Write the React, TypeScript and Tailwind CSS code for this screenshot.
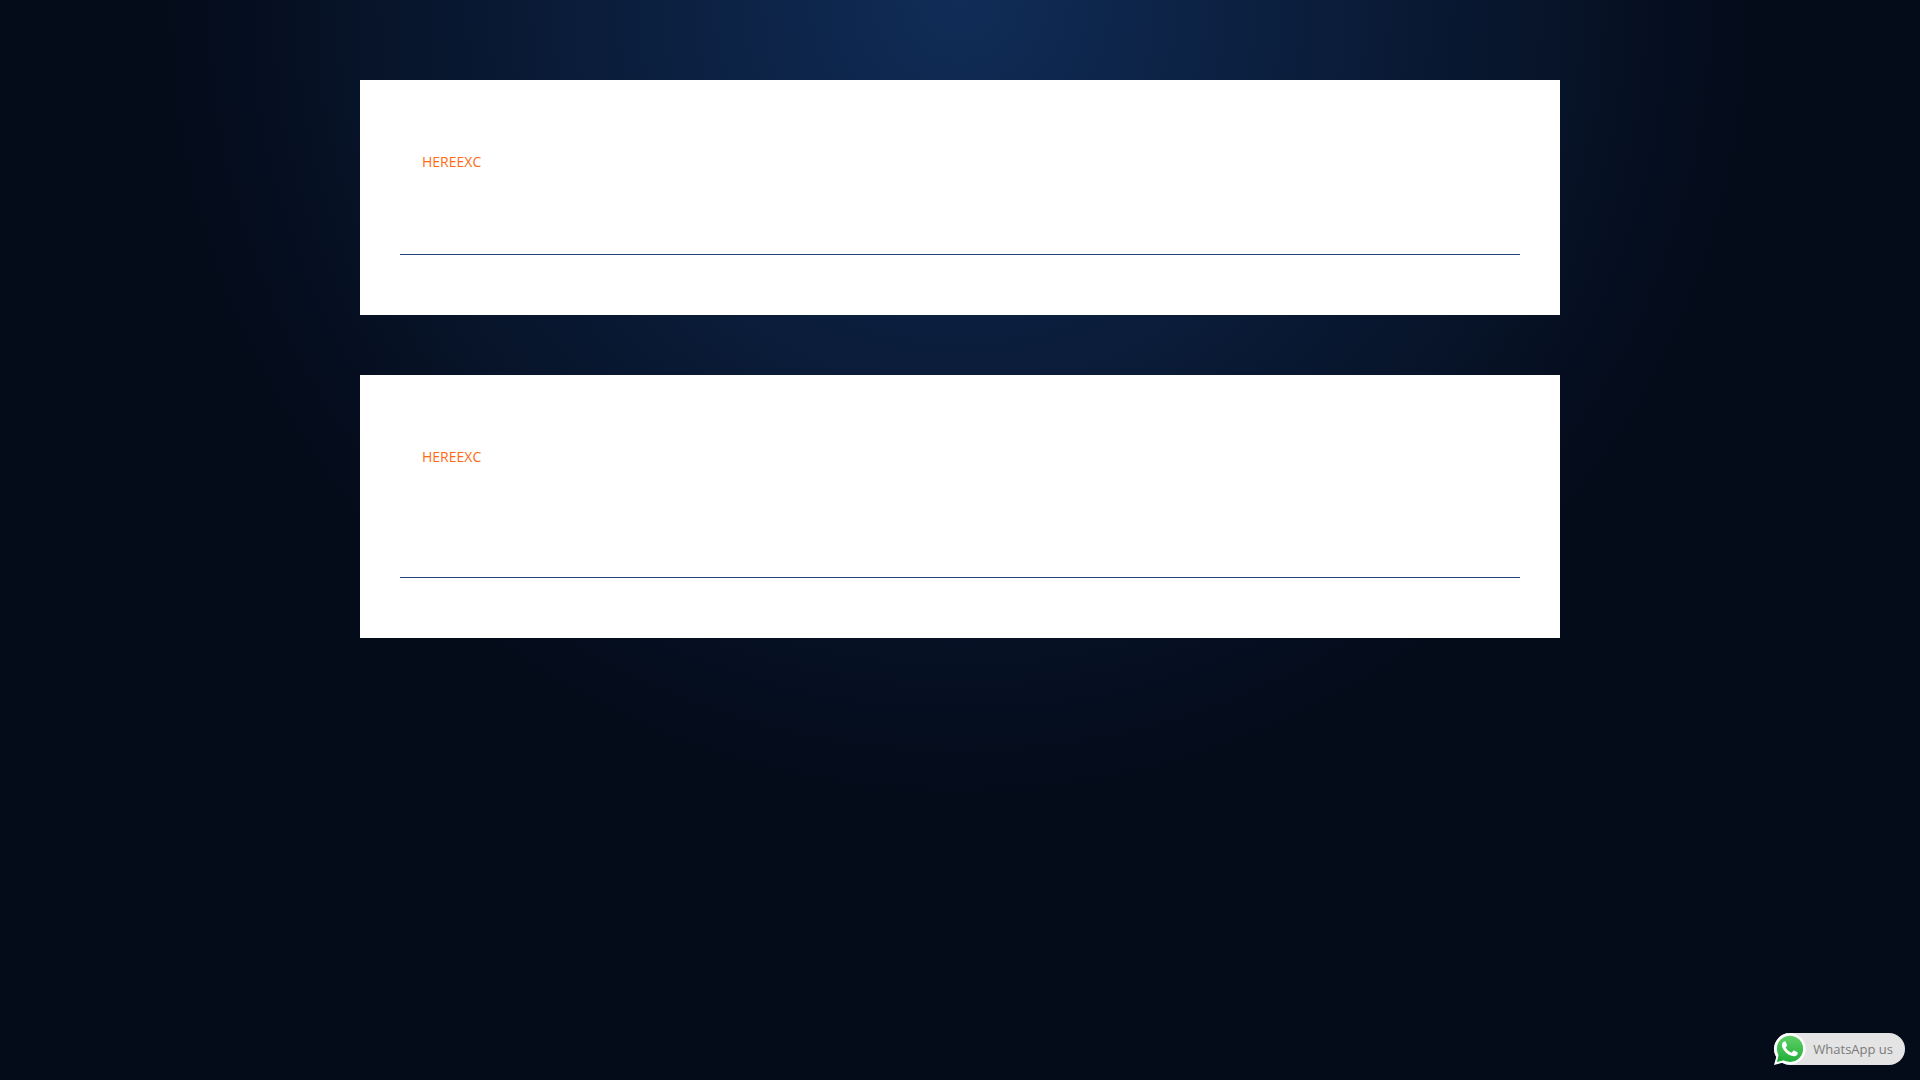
const entries = [
  { id: 1, title: 'HEREEXC', bodyHeight: 'min-h-[115px]' },
  { id: 2, title: 'HEREEXC', bodyHeight: 'min-h-[143px]' },
];

function WhatsAppIcon() {
  return (
    <svg viewBox="0 0 32 32" className="size-8 shrink-0" aria-hidden="true">
      <defs>
        <linearGradient id="wa-green" x1="0" y1="0" x2="0" y2="1">
          <stop offset="0" stopColor="#5fd168" />
          <stop offset="1" stopColor="#22ae3a" />
        </linearGradient>
      </defs>
      <path fill="#fff" d="M16 0a15.8 15.8 0 0 0-13.7 23.7L0 32l8.5-2.2A15.8 15.8 0 1 0 16 0Z" />
      <circle cx="16" cy="15.8" r="13.1" fill="url(#wa-green)" />
      <path fill="#22ae3a" d="M4.6 22.1 2.9 29l7-1.8Z" />
      <path
        fill="#fff"
        d="M12.1 9.2c-.3-.7-.6-.7-.9-.7h-.8c-.3 0-.7.1-1.1.5-.4.4-1.4 1.4-1.4 3.3s1.4 3.8 1.6 4.1c.2.3 2.7 4.3 6.7 5.8 3.3 1.3 4 1.1 4.7 1 .7-.1 2.3-.9 2.6-1.9.3-.9.3-1.7.2-1.9-.1-.2-.4-.3-.8-.5l-2.6-1.3c-.4-.1-.7-.2-1 .2l-1.2 1.5c-.2.3-.5.3-.9.1s-1.7-.6-3.2-2c-1.2-1-2-2.3-2.2-2.7-.2-.4 0-.6.2-.8l.6-.7.4-.6c.1-.3.1-.5 0-.7l-1.2-2.7Z"
      />
    </svg>
  );
}

export default function App() {
  return (
    <div className="min-h-screen bg-[#040b19] bg-[radial-gradient(circle_at_top,#102c57_0,#040b19_800px)] font-['Open_Sans',sans-serif]">
      <main className="mx-auto flex max-w-[1200px] flex-col gap-[60px] pt-20">
        {entries.map((entry) => (
          <article key={entry.id} className="bg-white px-10 py-[60px]">
            <div className={`border-b border-[#264478] px-[22px] pt-2.5 ${entry.bodyHeight}`}>
              <a href="#" className="block text-sm leading-6 text-[#ff6a13]">{entry.title}</a>
            </div>
          </article>
        ))}
      </main>

      {/* Chat button */}
      <a
        href="#"
        className="fixed right-[15px] bottom-[15px] flex h-8 items-center gap-[7px] rounded-full bg-[#e4e4e4] pr-3 text-[13px] leading-5 text-[#7a7a7a]"
      >
        <WhatsAppIcon />
        WhatsApp us
      </a>
    </div>
  );
}
